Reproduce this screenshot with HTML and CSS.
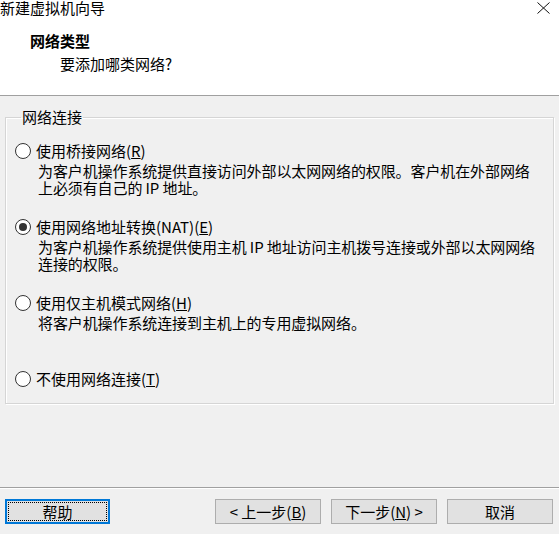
FILE: index.html
```html
<!DOCTYPE html>
<html lang="zh-CN">
<head>
<meta charset="utf-8">
<title>新建虚拟机向导</title>
<link rel="stylesheet" href="styles.css">
</head>
<body>
<div class="window">
  <div class="top">
    <div class="titlebar">
      <span class="title">新建虚拟机向导</span>
      <svg class="close" width="13" height="12" viewBox="0 0 13 12"><path d="M0.5 0.5 L12.5 11.5 M12.5 0.5 L0.5 11.5" stroke="#111" stroke-width="1" fill="none"/></svg>
    </div>
    <div class="h-title">网络类型</div>
    <div class="h-sub">要添加哪类网络?</div>
  </div>
  <div class="content">
    <fieldset class="group">
      <legend>网络连接</legend>
      <div class="option">
        <div class="opt-label"><span class="radio"></span>使用桥接网络(<u>R</u>)</div>
        <div class="opt-desc">为客户机操作系统提供直接访问外部以太网网络的权限。客户机在外部网络<br>上必须有自己的 IP 地址。</div>
      </div>
      <div class="option">
        <div class="opt-label"><span class="radio checked"></span>使用网络地址转换(NAT)(<u>E</u>)</div>
        <div class="opt-desc">为客户机操作系统提供使用主机 IP 地址访问主机拨号连接或外部以太网网络<br>连接的权限。</div>
      </div>
      <div class="option">
        <div class="opt-label"><span class="radio"></span>使用仅主机模式网络(<u>H</u>)</div>
        <div class="opt-desc">将客户机操作系统连接到主机上的专用虚拟网络。</div>
      </div>
      <div class="option last">
        <div class="opt-label"><span class="radio"></span>不使用网络连接(<u>T</u>)</div>
      </div>
    </fieldset>
  </div>
  <div class="footer">
    <button class="btn focused"><span class="focus-rect">帮助</span></button>
    <div class="spacer"></div>
    <button class="btn">&lt; 上一步(<u>B</u>)</button>
    <button class="btn">下一步(<u>N</u>) &gt;</button>
    <button class="btn cancel">取消</button>
  </div>
</div>
</body>
</html>
```
FILE: styles.css
```css
* { box-sizing: border-box; }
html, body {
  margin: 0;
  padding: 0;
  width: 559px;
  height: 534px;
  overflow: hidden;
  background: #f0f0f0;
  font-family: "Noto Sans CJK SC", "Noto Sans", sans-serif;
  font-size: 15px;
  color: #000;
}
.window {
  display: flex;
  flex-direction: column;
  height: 534px;
}
.top {
  background: #fff;
  height: 96px;
  border-bottom: 1px solid #a0a0a0;
}
.titlebar {
  display: flex;
  justify-content: space-between;
  align-items: flex-start;
  height: 31px;
}
.title {
  line-height: 16px;
  font-size: 15px;
}
.close {
  margin: 2px 9px 0 0;
}
.h-title {
  font-weight: bold;
  line-height: 20px;
  padding-left: 30px;
  font-size: 15px;
}
.h-sub {
  margin-top: 3px;
  line-height: 20px;
  padding-left: 60px;
  font-size: 15px;
}
.content {
  padding: 13px 5px 0 5px;
  height: 392px;
  border-bottom: 1px solid #a0a0a0;
  box-shadow: 0 1px 0 #fff;
}
.group {
  margin: 0;
  padding: 16px 0 0 9px;
  height: 295px;
  border: 1px solid #d5d5d5;
  box-shadow: inset 1px 1px 0 #fff, 1px 1px 0 #fff;
}
.group legend {
  padding: 0 1px;
  margin-left: 6px;
  line-height: 16px;
}
.option {
  margin-bottom: 21px;
}
.opt-label {
  display: flex;
  align-items: center;
  line-height: 20px;
  height: 20px;
}
.radio {
  width: 16px;
  height: 16px;
  border: 1px solid #333;
  border-radius: 50%;
  background: #fff;
  margin-right: 5px;
  display: flex;
  align-items: center;
  justify-content: center;
}
.radio.checked::after {
  content: "";
  width: 8px;
  height: 8px;
  border-radius: 50%;
  background: #333;
}
.opt-desc {
  padding-left: 23px;
  line-height: 17px;
  min-height: 34px;
  margin-top: 1px;
  letter-spacing: -0.1px;
}
u { text-decoration: underline; text-underline-offset: 1px; }
.footer {
  display: flex;
  align-items: flex-start;
  padding: 11px 6px 0 5px;
  gap: 10px;
}
.spacer { flex: 1; }
.btn {
  width: 106px;
  height: 25px;
  background: #e1e1e1;
  border: 1px solid #adadad;
  font-family: "Noto Sans CJK SC", "Noto Sans", sans-serif;
  font-size: 15px;
  line-height: 20px;
  padding: 0;
  color: #000;
  display: flex;
  align-items: center;
  justify-content: center;
}
.btn.focused {
  border: 2px solid #0078d7;
  width: 105px;
  padding: 1px;
}
.focus-rect {
  width: 100%;
  height: 100%;
  border: 1px dotted #000;
  display: flex;
  align-items: center;
  justify-content: center;
}
```
